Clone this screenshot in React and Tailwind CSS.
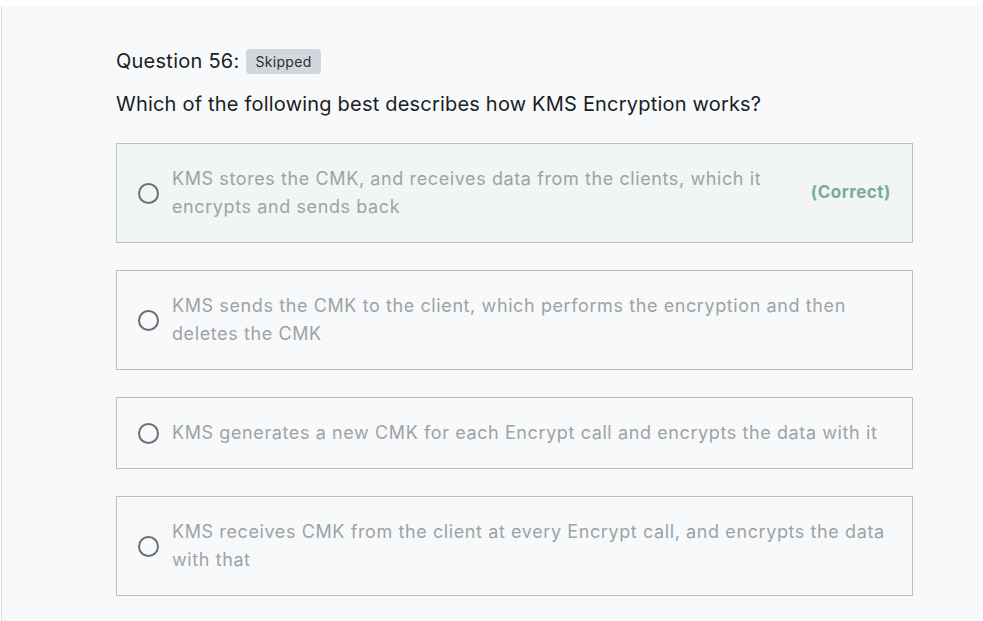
import React from 'react';

// --- OPTIONS ---
const options = [
  {
    id: 'a',
    text: 'KMS stores the CMK, and receives data from the clients, which it encrypts and sends back',
    correct: true,
  },
  {
    id: 'b',
    text: 'KMS sends the CMK to the client, which performs the encryption and then deletes the CMK',
  },
  {
    id: 'c',
    text: 'KMS generates a new CMK for each Encrypt call and encrypts the data with it',
  },
  {
    id: 'd',
    text: 'KMS receives CMK from the client at every Encrypt call, and encrypts the data with that',
  },
];

function Radio() {
  return (
    <span className="shrink-0 w-[21px] h-[21px] rounded-full border-[2.5px] border-[#6a6f73] bg-transparent" />
  );
}

function App() {
  return (
    <div
      className="min-h-screen bg-white pt-[6px] text-[#1c1d1f]"
      style={{ fontFamily: 'Inter, "Noto Sans", "Liberation Sans", sans-serif' }}
    >
      <div className="ml-px mr-[3px] h-[615px] border-l border-[#dcdee0] bg-[#f7f9fa] pl-[114px] pr-[67px] pt-[41px]">
        {/* HEADER */}
        <div className="flex items-center gap-[7px]">
          <h2 className="text-[20px] leading-[28px] tracking-[0.25px] text-[#1c1d1f]">Question 56:</h2>
          <span className="flex h-[25px] items-center rounded-[4px] bg-[#d1d7dc] px-[9px] text-[14px] tracking-[0.3px] text-[#2d2f31]">
            Skipped
          </span>
        </div>
        <p className="mt-[15px] text-[20px] leading-[28px] tracking-[0.2px]">
          Which of the following best describes how KMS Encryption works?
        </p>

        {/* OPTIONS */}
        <div className="mt-[25px] flex flex-col gap-[27px]">
          {options.map((opt) => (
            <div
              key={opt.id}
              className={`flex items-center gap-[13px] border border-[#babfc4] py-[21px] pl-[21px] pr-[21px] ${
                opt.correct ? 'bg-[#f1f5f4]' : 'bg-[#f7f9fa]'
              }`}
            >
              <Radio />
              <p className="flex-1 text-[18px] leading-[28px] tracking-[0.6px] text-[#9da3a7]">{opt.text}</p>
              {opt.correct && (
                <span className="ml-[20px] text-[17px] font-bold tracking-[0.5px] text-[#7aab9c]">(Correct)</span>
              )}
            </div>
          ))}
        </div>
      </div>
    </div>
  );
}

export default App;
